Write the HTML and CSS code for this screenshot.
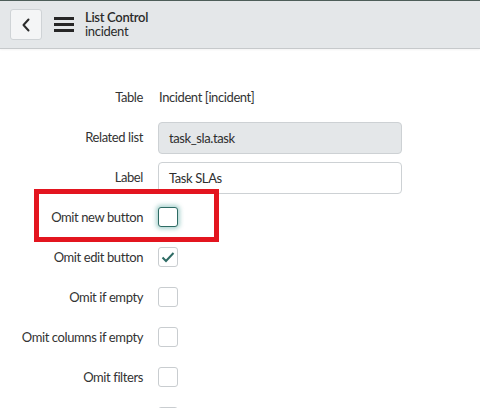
FILE: index.html
```html
<!DOCTYPE html>
<html>
<head>
<meta charset="utf-8">
<link rel="stylesheet" href="styles.css">
</head>
<body>
<header class="topbar">
  <button class="back-btn" aria-label="Back">
    <svg width="10" height="14" viewBox="0 0 10 14"><polyline points="7.5,1.5 2.5,7 7.5,12.5" fill="none" stroke="#2b2b2b" stroke-width="2" stroke-linecap="round" stroke-linejoin="round"/></svg>
  </button>
  <span class="hamburger"><i></i><i></i><i></i></span>
  <div class="title">
    <div class="title-main">List Control</div>
    <div class="title-sub">incident</div>
  </div>
</header>
<main class="form">
  <div class="row"><div class="lbl">Table</div><div class="val">Incident [incident]</div></div>
  <div class="row"><div class="lbl">Related list</div><div class="input readonly">task_sla.task</div></div>
  <div class="row"><div class="lbl">Label</div><div class="input">Task SLAs</div></div>
  <div class="row highlight-row">
    <div class="highlight"></div>
    <div class="lbl">Omit new button</div><div class="cb focus"></div>
  </div>
  <div class="row"><div class="lbl">Omit edit button</div><div class="cb">
    <svg width="14" height="12" viewBox="0 0 14 12"><polyline points="1.5,6.5 5,10 12.5,2" fill="none" stroke="#2e6b64" stroke-width="2"/></svg>
  </div></div>
  <div class="row"><div class="lbl">Omit if empty</div><div class="cb"></div></div>
  <div class="row"><div class="lbl">Omit columns if empty</div><div class="cb"></div></div>
  <div class="row"><div class="lbl">Omit filters</div><div class="cb"></div></div>
  <div class="row"><div class="lbl"></div><div class="cb"></div></div>
</main>
</body>
</html>
```
FILE: styles.css
```css
html, body {
  margin: 0;
  padding: 0;
  background: #fff;
  overflow: hidden;
  height: 408px;
}
body {
  font-family: "Lato", "Open Sans", sans-serif;
  color: #2e2e2e;
}
.topbar {
  height: 47px;
  border-top: 1px solid #4d5e59;
  border-bottom: 1px solid #c6c9cb;
  background: #e4e7e9;
  display: flex;
  align-items: center;
  padding-left: 10px;
  box-shadow: 0 1px 2px rgba(0,0,0,0.05);
}
.back-btn {
  width: 32px;
  height: 31px;
  box-sizing: border-box;
  border: 1px solid #cfd3d6;
  border-radius: 3px;
  background: #f4f5f6;
  display: flex;
  align-items: center;
  justify-content: center;
  padding: 0;
  margin-right: 12px;
}
.hamburger {
  width: 20px;
  display: flex;
  flex-direction: column;
  gap: 3px;
  margin-right: 11px;
}
.hamburger i {
  display: block;
  height: 3px;
  background: #262626;
}
.title {
  font-size: 13px;
  line-height: 14px;
  color: #2b2b2b;
  letter-spacing: -0.3px;
  margin-top: -1px;
}
.title-main { font-weight: 600; }
.form {
  padding-top: 28px;
}
.row {
  display: grid;
  grid-template-columns: 143px 244px;
  column-gap: 15px;
  align-items: center;
  height: 40px;
  font-size: 13px;
  letter-spacing: -0.4px;
  position: relative;
}
.lbl {
  text-align: right;
  color: #333;
}
.val {
  color: #333;
  padding-left: 1px;
}
.input {
  height: 32px;
  box-sizing: border-box;
  border: 1px solid #cdd1d4;
  border-radius: 4px;
  background: #fff;
  display: flex;
  align-items: center;
  padding-left: 10px;
  color: #2e2e2e;
  margin-top: 1px;
}
.input.readonly {
  background: #e4e7e9;
}
.cb {
  width: 20px;
  height: 20px;
  box-sizing: border-box;
  border: 1px solid #c9cdd0;
  border-radius: 3px;
  background: #fff;
  display: flex;
  align-items: center;
  justify-content: center;
}
.cb.focus {
  border: 1.5px solid #2e6b64;
  box-shadow: 0 0 4px 2px rgba(70, 160, 150, 0.45);
}
.highlight {
  position: absolute;
  left: 34px;
  top: -8px;
  width: 185px;
  height: 53px;
  box-sizing: border-box;
  border: 5px solid #e3151f;
  pointer-events: none;
}
```
